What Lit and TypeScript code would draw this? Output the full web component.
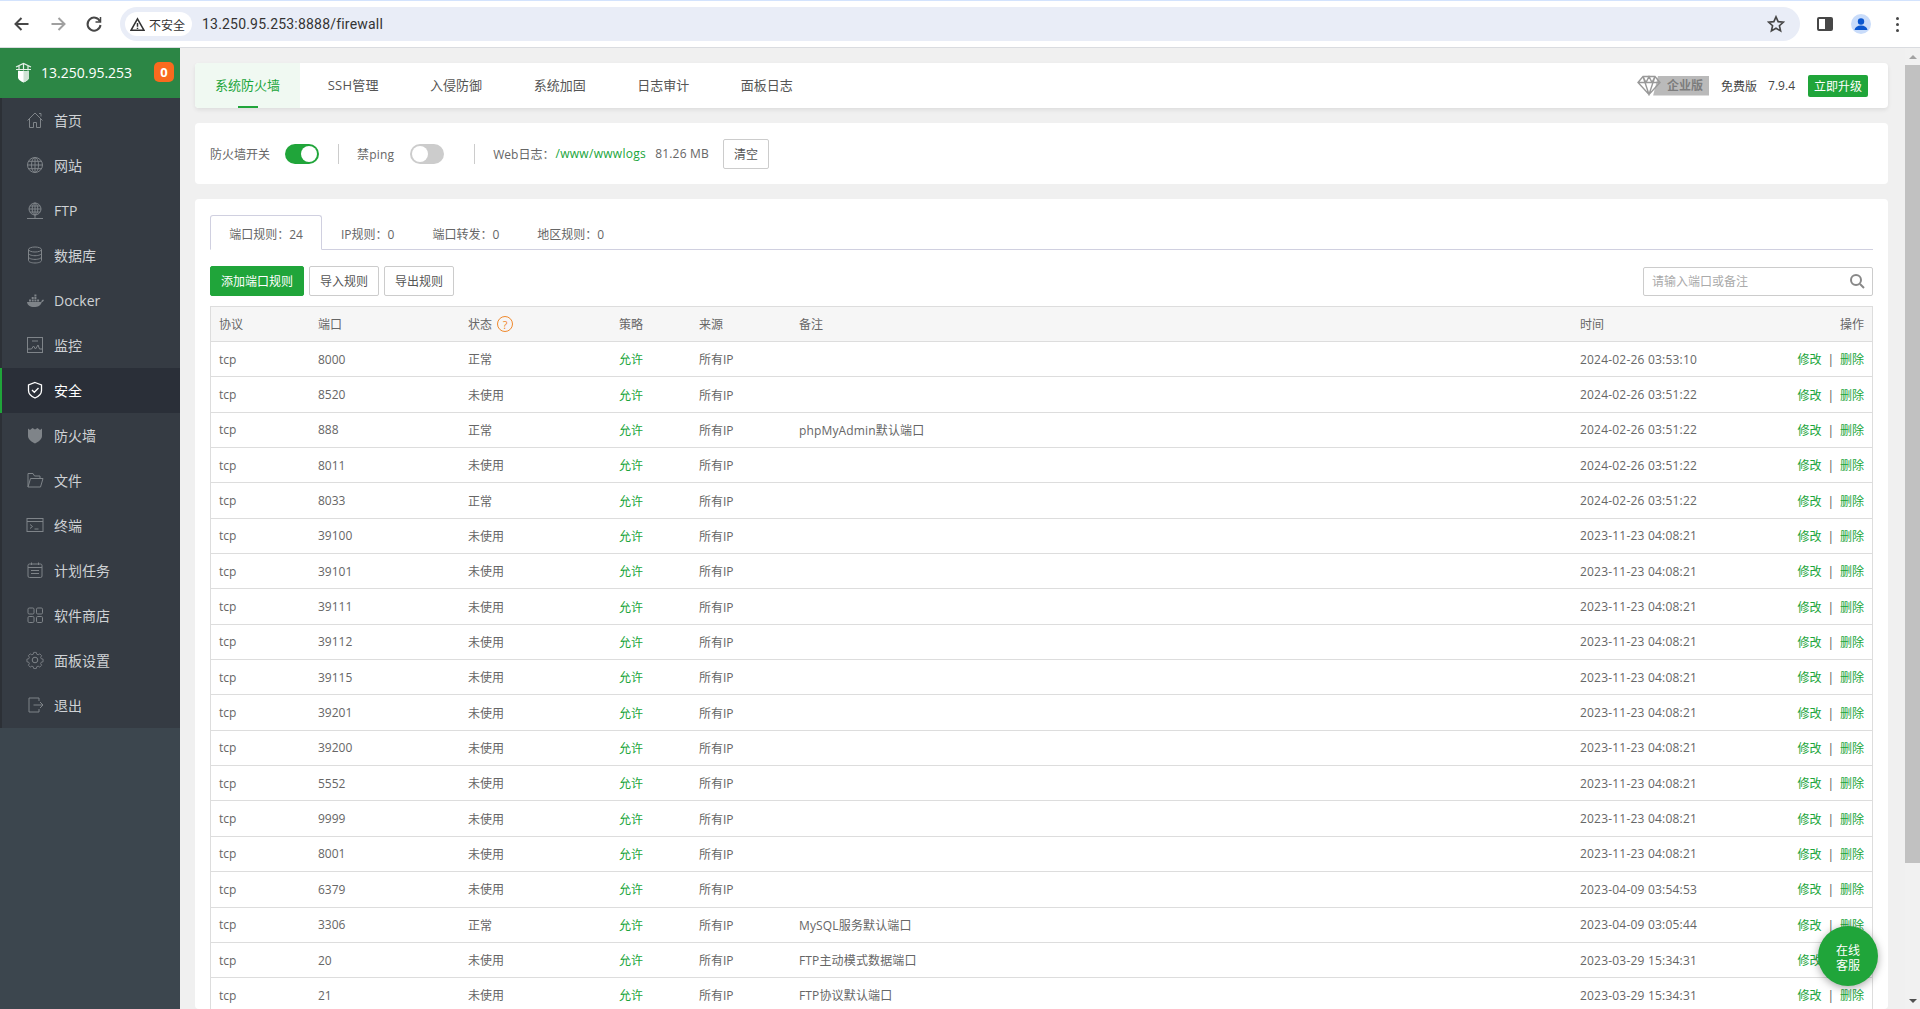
import { LitElement, html, css, svg } from "lit";
import { customElement } from "lit/decorators.js";

const menuIcons: Record<string, unknown> = {
  home: svg`<path d="M2.500 10.500 10 3l7.500 7.500M4.500 9v8.500h4v-5h3v5h4V9M14 3.500h2v3"/>`,
  web: svg`<circle cx="10" cy="10" r="7.500"/><ellipse cx="10" cy="10" rx="3.500" ry="7.500"/><path d="M10 2.500v15M2.500 10h15M3.600 6.300h12.800M3.600 13.700h12.800"/>`,
  ftp: svg`<circle cx="10" cy="8" r="6"/><ellipse cx="10" cy="8" rx="2.800" ry="6"/><path d="M10 2v12M4 8h12M5 5h10M5 11h10M10 14v3M2 17.500h16"/>`,
  db: svg`<ellipse cx="10" cy="4.500" rx="6.500" ry="2.500"/><path d="M3.500 4.500v11c0 1.400 2.900 2.500 6.500 2.500s6.500-1.100 6.500-2.500v-11M3.500 8.200c0 1.400 2.900 2.500 6.500 2.500s6.500-1.100 6.500-2.500M3.500 11.900c0 1.400 2.900 2.500 6.500 2.500s6.500-1.100 6.500-2.500"/>`,
  docker: svg`<g fill="currentColor" stroke="none"><path d="M2 11h13.500c.8-.1 1.300-.9 1.300-1.800.8-.5 1.700-.5 2.200-.2-.4 1.300-1.300 2-2.300 2.200C15.600 14.700 13 16 9 16c-4 0-6.500-1.800-7-5z"/><path d="M4 8.500h2v2H4zM6.700 8.500h2v2h-2zM9.400 8.500h2v2h-2zM6.700 6h2v2h-2zM9.400 6h2v2h-2zM9.400 3.500h2v2h-2zM12.100 8.500h2v2h-2z"/></g>`,
  monitor: svg`<rect x="2.500" y="2.500" width="15" height="15"/><path d="M2.500 14h4l2-3 2 3 2.500-4 1.500 4h3M7 6h6"/>`,
  safe: svg`<path d="M10 2.500 16.500 5v5.500c0 3.500-3 6-6.500 7.500-3.500-1.500-6.500-4-6.500-7.500V5zM7 10l2.300 2.300L13.500 8"/>`,
  fire: svg`<path fill="currentColor" stroke="none" d="M3 3.500 5 5l2.500-2L10 4.500 12.500 3 15 5l2-1.500V11c0 3.300-3.300 5.700-7 7.500-3.700-1.800-7-4.200-7-7.500z"/>`,
  file: svg`<path d="M3 17V3.500h5l1.500 2.500H15v2.500M3 17l2.500-8.500H18L15.500 17z"/>`,
  term: svg`<rect x="2" y="3.500" width="16" height="13"/><path d="M2 6.500h16M5 9.500l2.500 2L5 13.500M9.500 14h4"/>`,
  cron: svg`<rect x="3" y="4" width="14" height="13.500" rx="1.500"/><path d="M3 7.500h14M6.500 2.500V5M13.500 2.500V5M6 10.500h8M6 13.500h8"/>`,
  soft: svg`<rect x="3" y="3" width="6" height="6" rx="1.200"/><rect x="11.500" y="3" width="6" height="6" rx="1.200"/><rect x="3" y="11.500" width="6" height="6" rx="1.200"/><rect x="11.500" y="11.500" width="6" height="6" rx="1.200"/>`,
  gear: svg`<circle cx="10" cy="10" r="2.800"/><path d="M8.500 2.500h3l.5 2.100 1.600.7 1.900-1.100 2.100 2.100-1.100 1.900.7 1.600 2.100.5v3l-2.100.5-.7 1.600 1.100 1.900-2.100 2.100-1.900-1.100-1.600.7-.5 2.100h-3l-.5-2.100-1.600-.7-1.900 1.100-2.100-2.100 1.100-1.900-.7-1.600-2.100-.5v-3l2.100-.5.7-1.600-1.100-1.900 2.100-2.100 1.900 1.100 1.600-.7z" transform="translate(1.300 .2) scale(.87)"/>`,
  exit: svg`<path d="M14 6V3H4v14h10v-3M8.500 10H18M15 7l3 3-3 3"/>`,
};

const menu = [
  ["首页", "home"], ["网站", "web"], ["FTP", "ftp"], ["数据库", "db"], ["Docker", "docker"],
  ["监控", "monitor"], ["安全", "safe"], ["防火墙", "fire"], ["文件", "file"], ["终端", "term"],
  ["计划任务", "cron"], ["软件商店", "soft"], ["面板设置", "gear"], ["退出", "exit"],
];

const t1 = "2023-11-23 04:08:21";
const t0 = "2024-02-26 03:51:22";
const rows: [string, string, string, string][] = [
  ["8000", "正常", "", "2024-02-26 03:53:10"],
  ["8520", "未使用", "", t0],
  ["888", "正常", "phpMyAdmin默认端口", t0],
  ["8011", "未使用", "", t0],
  ["8033", "正常", "", t0],
  ["39100", "未使用", "", t1],
  ["39101", "未使用", "", t1],
  ["39111", "未使用", "", t1],
  ["39112", "未使用", "", t1],
  ["39115", "未使用", "", t1],
  ["39201", "未使用", "", t1],
  ["39200", "未使用", "", t1],
  ["5552", "未使用", "", t1],
  ["9999", "未使用", "", t1],
  ["8001", "未使用", "", t1],
  ["6379", "未使用", "", "2023-04-09 03:54:53"],
  ["3306", "正常", "MySQL服务默认端口", "2023-04-09 03:05:44"],
  ["20", "未使用", "FTP主动模式数据端口", "2023-03-29 15:34:31"],
  ["21", "未使用", "FTP协议默认端口", "2023-03-29 15:34:31"],
];

@customElement("app-root")
export class AppRoot extends LitElement {
  static styles = css`
    :host {
      display: block;
      width: 1920px;
      height: 1009px;
      overflow: hidden;
      position: relative;
      background: #f0f0f0;
      font-family: "Open Sans", "Noto Sans CJK SC", sans-serif;
      font-size: 12px;
      color: #666;
    }
    * { box-sizing: border-box; }
    svg { display: block; }

    /* browser chrome */
    .chrome {
      height: 48px;
      background: #fff;
      border-top: 1px solid #d3e3fd;
      border-bottom: 1px solid #dadce0;
      display: flex;
      align-items: center;
      padding-left: 12px;
      color: #474747;
      font-family: Roboto, "Noto Sans CJK SC", sans-serif;
    }
    .nav { display: flex; gap: 16px; width: 108px; flex: none; }
    .nav svg { width: 20px; height: 20px; fill: none; stroke: currentColor; stroke-width: 2; }
    .nav svg.off { color: #a0a0a0; }
    .url {
      width: 1680px;
      flex: none;
      height: 34px;
      background: #e9edf7;
      border-radius: 17px;
      display: flex;
      align-items: center;
      padding: 0 5px;
    }
    .chip {
      width: 67px;
      height: 24px;
      background: #fff;
      border-radius: 12px;
      display: flex;
      align-items: center;
      gap: 4px;
      padding-left: 5px;
      color: #333;
      font-size: 12px;
    }
    .chip svg { width: 15px; height: 15px; fill: none; stroke: #333; stroke-width: 1.600; }
    .addr { margin-left: 10px; font-size: 14px; color: #333; flex: 1; letter-spacing: .2px; }
    .star { width: 18px; height: 18px; fill: none; stroke: #474747; stroke-width: 1.800; margin-right: 10px; }
    .tools { display: flex; align-items: center; margin-left: 17px; }
    .tools .panel { width: 16px; height: 14px; border: 2px solid #474747; border-radius: 2px; background: linear-gradient(90deg, #fff 50%, #474747 50%); }
    .avatar { margin-left: 18px; width: 20px; height: 20px; border-radius: 50%; background: #c9dcfa; overflow: hidden; }
    .avatar svg { width: 20px; height: 20px; fill: #0b57d0; }
    .dots { margin-left: 25px; display: flex; flex-direction: column; gap: 3px; }
    .dots i { width: 3px; height: 3px; border-radius: 50%; background: #474747; display: block; }

    .body { display: flex; height: 961px; }

    /* sidebar */
    .side {
      width: 180px;
      flex: none;
      background: #3c464e;
      display: flex;
      flex-direction: column;
    }
    .brand {
      height: 50px;
      flex: none;
      background: #2c8645;
      color: #fff;
      display: flex;
      align-items: center;
      padding: 0 6px 2px 15px;
      font-size: 14px;
    }
    .brand svg { width: 17px; height: 21px; margin-right: 9px; flex: none; }
    .brand .ip { flex: 1; white-space: nowrap; }
    .badge {
      width: 20px;
      height: 20px;
      background: #f96a1e;
      border-radius: 5px;
      display: flex;
      align-items: center;
      justify-content: center;
      font-weight: 700;
      font-size: 13px;
    }
    .menu { background: #353b43; border-left: 2px solid #2c3036; }
    .item {
      height: 45px;
      display: flex;
      align-items: center;
      padding-left: 23px;
      color: #cfd2d5;
      font-size: 14px;
      margin-left: -2px;
      border-left: 2px solid transparent;
    }
    .item.cn { padding-bottom: 2px; }
    .item svg {
      width: 20px;
      height: 20px;
      fill: none;
      stroke: currentColor;
      stroke-width: 1;
      color: #7f8489;
      margin-right: 9px;
      flex: none;
    }
    .item.active { background: #2a2f38; color: #fff; border-left-color: #20a53a; }
    .item.active svg { color: #fff; stroke-width: 1.300; }

    /* main */
    .main { flex: 1; min-width: 0; padding: 15px 32px 0 15px; overflow: hidden; display: flex; flex-direction: column; gap: 15px; }
    .card { background: #fff; border-radius: 4px; flex: none; }
    .top {
      height: 45px;
      display: flex;
      align-items: stretch;
      box-shadow: 0 2px 4px rgba(0, 0, 0, .08);
      font-size: 13px;
      color: #555;
    }
    .tab { padding: 0 25.750px 2px; display: flex; align-items: center; position: relative; }
    .tab.on { padding: 0 20px 2px; margin-right: 2px; background: #f0f9f2; color: #20a53a; border-radius: 4px 0 0 4px; }
    .tab.ssh { letter-spacing: .2px; }
    .tab.on::after {
      content: "";
      position: absolute;
      left: 43px;
      width: 20px;
      bottom: 0;
      height: 2px;
      background: #20a53a;
    }
    .right { margin-left: auto; display: flex; align-items: center; padding-right: 20px; font-size: 12px; color: #444; }
    .ent { display: flex; align-items: center; position: relative; margin-right: 12px; }
    .ent svg { width: 24px; height: 21px; fill: none; stroke: #999; stroke-width: 1.400; position: relative; z-index: 1; margin-right: -8px; }
    .ent span {
      background: #bababa;
      color: #7d7d7d;
      font-weight: 600;
      height: 20px;
      line-height: 20px;
      padding: 0 6px 0 14px;
      width: 56px;
      white-space: nowrap;
      clip-path: polygon(5px 0, 100% 0, 100% 100%, 0 100%);
    }
    .ver { margin-left: 11px; margin-right: 13px; }
    .up { background: #20a53a; color: #fff; width: 60px; height: 22px; border-radius: 2px; display: flex; align-items: center; justify-content: center; }

    .ctl { height: 61px; display: flex; align-items: center; padding: 0 15px; }
    .ctl .lbl { white-space: nowrap; }
    .ctl .wide { letter-spacing: .2px; }
    .sw { width: 34px; height: 20px; border-radius: 10px; position: relative; flex: none; margin: 1px 0 0 15px; }
    .sw::after { content: ""; position: absolute; top: 2px; width: 16px; height: 16px; background: #fff; border-radius: 50%; }
    .sw.on { background: #20a53a; }
    .sw.on::after { left: 16px; }
    .sw.off { background: #ccc; margin-left: 16px; }
    .sw.off::after { left: 2px; }
    .sep { width: 1px; height: 20px; background: #ccc; margin: 0 18px 0 19px; flex: none; }
    .sep.far { margin-left: 30px; }
    .link { color: #20a53a; margin: 0 9px 0 1px; letter-spacing: .3px; }
    .btn {
      height: 30px;
      border: 1px solid #ccc;
      border-radius: 2px;
      background: #fff;
      color: #555;
      display: inline-flex;
      align-items: center;
      justify-content: center;
      font-size: 12px;
      flex: none;
    }
    .btn.clear { width: 46px; margin-left: 14px; }

    .panel-card { flex: 1; padding: 16px 15px 0; min-height: 0; }
    .sub { display: flex; height: 35px; border-bottom: 1px solid #d0d0e0; }
    .sub div { padding: 2px 19px 0; height: 35px; display: flex; align-items: center; }
    .sub div.on { width: 112px; border: 1px solid #d0d0e0; border-bottom: 1px solid #fff; border-radius: 3px 3px 0 0; justify-content: center; padding: 2px 0 0; }
    .bar { display: flex; gap: 5px; margin-top: 16px; height: 30px; align-items: center; }
    .btn.add { width: 94px; background: #20a53a; border-color: #20a53a; color: #fff; }
    .btn.plain { width: 70px; }
    .search {
      margin-left: auto;
      width: 230px;
      height: 29px;
      border: 1px solid #ccc;
      border-radius: 2px;
      display: flex;
      align-items: center;
      padding: 0 7px 0 8px;
      color: #aaa;
    }
    .search span { flex: 1; }
    .search svg { width: 16px; height: 16px; fill: none; stroke: #888; stroke-width: 2; }

    table { display: block; margin-top: 10px; border-collapse: collapse; border: 1px solid #ddd; border-bottom: 0; }
    thead, tbody { display: block; }
    tr {
      display: grid;
      grid-template-columns: 99px 150px 151px 80px 100px 781px 1fr 120px;
      height: 35.350px;
      align-items: center;
      border-bottom: 1px solid #ddd;
    }
    thead tr { height: 35px; background: #f6f6f6; }
    th, td { padding: 0 8px; font-weight: 400; text-align: left; white-space: nowrap; display: block; }
    th.st { display: flex; align-items: center; }
    th:last-child, td:last-child { text-align: right; }
    td.time { letter-spacing: .2px; }
    td.note { letter-spacing: .15px; }
    .q {
      width: 16px;
      height: 16px;
      border: 1px solid #f0892d;
      color: #f0892d;
      border-radius: 50%;
      display: flex;
      align-items: center;
      justify-content: center;
      font-size: 11px;
      margin-left: 5px;
    }
    .ok { color: #20a53a; }
    .ops span { color: #555; margin: 0 6px; }

    .fab {
      position: absolute;
      left: 1818px;
      top: 926px;
      width: 60px;
      height: 60px;
      padding-top: 3px;
      border-radius: 50%;
      background: #20a53a;
      color: #fff;
      box-shadow: 0 2px 8px rgba(0, 0, 0, .35);
      display: flex;
      align-items: center;
      justify-content: center;
      text-align: center;
      line-height: 15px;
      font-size: 12px;
    }

    .scroll {
      position: absolute;
      right: 0;
      top: 48px;
      bottom: 0;
      width: 15px;
      background: #f1f1f1;
      display: flex;
      flex-direction: column;
      align-items: center;
    }
    .arrow { height: 17px; flex: none; display: flex; align-items: center; justify-content: center; }
    .arrow i { display: block; width: 0; height: 0; border-left: 4px solid transparent; border-right: 4px solid transparent; }
    .arrow.u i { border-bottom: 4px solid #a3a3a3; }
    .arrow.d i { border-top: 4px solid #505050; }
    .thumb { width: 15px; height: 798px; background: #c1c1c1; flex: none; }
    .fill { flex: 1; }
  `;

  render() {
    return html`
      <div class="chrome">
        <div class="nav">
          <svg viewBox="0 0 20 20"><path d="M16.500 10H4M9.500 4l-6 6 6 6"/></svg>
          <svg class="off" viewBox="0 0 20 20"><path d="M3.500 10H16M10.500 4l6 6-6 6"/></svg>
          <svg viewBox="0 0 20 20"><path d="M16 7.500A6.500 6.500 0 1 0 16.500 11"/><path d="M16.500 3v5h-5" stroke-width="1.500"/></svg>
        </div>
        <div class="url">
          <div class="chip">
            <svg viewBox="0 0 16 16"><path d="M8 2 14.800 14H1.200zM8 6.500v4M8 11.500v1.300"/></svg>不安全
          </div>
          <div class="addr">13.250.95.253:8888/firewall</div>
          <svg class="star" viewBox="0 0 20 20"><path d="m10 2 2.400 5.400 5.800.6-4.400 3.900 1.300 5.800L10 14.700l-5.100 3 1.300-5.800L1.800 8l5.800-.6z"/></svg>
        </div>
        <div class="tools">
          <div class="panel"></div>
          <div class="avatar"><svg viewBox="0 0 20 20"><circle cx="10" cy="7.500" r="3.200"/><path d="M3.500 16c.5-3 3-4.500 6.500-4.500s6 1.500 6.500 4.500z"/></svg></div>
          <div class="dots"><i></i><i></i><i></i></div>
        </div>
      </div>
      <div class="body">
        <aside class="side">
          <div class="brand">
            <svg viewBox="0 0 17 21"><path fill="#fff" d="M3 9h11v6.500c0 2-2.500 3.800-5.500 5-3-1.200-5.500-3-5.500-5z"/><path fill="#cfe3d5" d="M8.500 9H14v6.500c0 2-2.500 3.800-5.500 5z"/><path fill="none" stroke="#e6f0e9" stroke-width="1.200" d="M1 5 8.500 1.500 16 5M4 4v4.500M8.500 2v6.500M13 4v4.500M1 7.500h15"/></svg>
            <span class="ip">13.250.95.253</span>
            <span class="badge">0</span>
          </div>
          <nav class="menu">
            ${menu.map(
              ([label, icon]) => html`
                <div class="item ${label === "安全" ? "active" : ""} ${/^[A-Za-z]+$/.test(label) ? "" : "cn"}">
                  <svg viewBox="0 0 20 20">${menuIcons[icon]}</svg>${label}
                </div>
              `
            )}
          </nav>
        </aside>
        <main class="main">
          <div class="card top">
            <div class="tab on">系统防火墙</div>
            <div class="tab ssh">SSH管理</div>
            <div class="tab">入侵防御</div>
            <div class="tab">系统加固</div>
            <div class="tab">日志审计</div>
            <div class="tab">面板日志</div>
            <div class="right">
              <div class="ent">
                <svg viewBox="0 0 24 21"><path d="M6 1.500h12l5 6L12 19.500 1 7.500zM1 7.500h22M6 1.500l6 18 6-18M6 1.500l3 6 3-6 3 6 3-6"/></svg>
                <span>企业版</span>
              </div>
              <span>免费版</span><span class="ver">7.9.4</span>
              <div class="up">立即升级</div>
            </div>
          </div>
          <div class="card ctl">
            <span class="lbl">防火墙开关</span><div class="sw on"></div>
            <div class="sep"></div>
            <span class="lbl wide">禁ping</span><div class="sw off"></div>
            <div class="sep far"></div>
            <span class="lbl">Web日志：</span><span class="link">/www/wwwlogs</span><span class="lbl wide">81.26 MB</span>
            <div class="btn clear">清空</div>
          </div>
          <div class="card panel-card">
            <div class="sub">
              <div class="on">端口规则：24</div>
              <div>IP规则：0</div>
              <div>端口转发：0</div>
              <div>地区规则：0</div>
            </div>
            <div class="bar">
              <div class="btn add">添加端口规则</div>
              <div class="btn plain">导入规则</div>
              <div class="btn plain">导出规则</div>
              <div class="search">
                <span>请输入端口或备注</span>
                <svg viewBox="0 0 16 16"><circle cx="7" cy="7" r="5"/><path d="m11 11 4 4"/></svg>
              </div>
            </div>
            <table>
              <thead>
                <tr>
                  <th>协议</th><th>端口</th><th class="st">状态<span class="q">?</span></th><th>策略</th><th>来源</th><th>备注</th><th>时间</th><th>操作</th>
                </tr>
              </thead>
              <tbody>
                ${rows.map(
                  ([port, st, note, time]) => html`
                    <tr>
                      <td>tcp</td><td>${port}</td><td>${st}</td><td class="ok">允许</td><td>所有IP</td><td class="note">${note}</td><td class="time">${time}</td>
                      <td class="ok ops">修改<span>|</span>删除</td>
                    </tr>
                  `
                )}
              </tbody>
            </table>
          </div>
        </main>
      </div>
      <div class="fab">在线<br />客服</div>
      <div class="scroll">
        <div class="arrow u"><i></i></div>
        <div class="thumb"></div>
        <div class="fill"></div>
        <div class="arrow d"><i></i></div>
      </div>
    `;
  }
}
